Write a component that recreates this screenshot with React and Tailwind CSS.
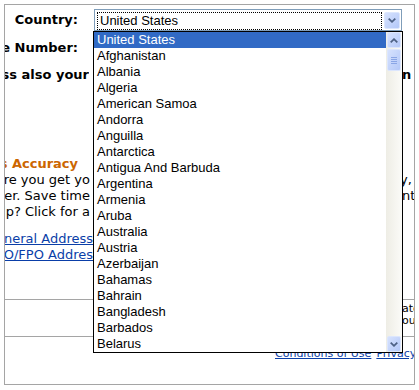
import React from "react";

const COUNTRIES = [
  "United States",
  "Afghanistan",
  "Albania",
  "Algeria",
  "American Samoa",
  "Andorra",
  "Anguilla",
  "Antarctica",
  "Antigua And Barbuda",
  "Argentina",
  "Armenia",
  "Aruba",
  "Australia",
  "Austria",
  "Azerbaijan",
  "Bahamas",
  "Bahrain",
  "Bangladesh",
  "Barbados",
  "Belarus",
];

const Chevron = ({ up }) => (
  <svg width="8" height="5" viewBox="0 0 8 5">
    <path
      d={up ? "M0.7 4.3 4 1.2 7.3 4.3" : "M0.7 0.7 4 3.8 7.3 0.7"}
      fill="none"
      stroke="#4d6185"
      strokeWidth="1.8"
    />
  </svg>
);

// XP style blue scroll/combo button
const XpButton = ({ up, className = "" }) => (
  <div
    className={`flex items-center justify-center rounded-[2px] border border-[#dce6fd] bg-gradient-to-br from-[#d6e2fe] to-[#b4c8f8] ${className}`}
  >
    <Chevron up={up} />
  </div>
);

const DropdownList = () => (
  <div className="absolute left-[-2px] top-[21px] w-[310px] h-[322px] border border-black bg-white flex z-10">
    {/* Items */}
    <div className="w-[292px] flex flex-col font-['Liberation_Sans',Arial,sans-serif] text-[13px] leading-[16px]">
      {COUNTRIES.map((c, i) => (
        <div
          key={c}
          className={`h-[16px] pl-[3px] whitespace-nowrap ${
            i === 0 ? "bg-[#316ac5] text-white" : "text-black"
          }`}
        >
          {c}
        </div>
      ))}
    </div>

    {/* Scrollbar */}
    <div className="w-[16px] flex flex-col bg-gradient-to-r from-[#eeede5] to-[#fbfbf8]">
      <XpButton up className="h-[16px] mx-[1px]" />
      <div className="mt-[1px] h-[22px] mx-[1px] rounded-[2px] border border-[#dce6fd] bg-gradient-to-br from-[#d6e2fe] to-[#b4c8f8] flex flex-col items-center justify-center gap-[1px]">
        <div className="w-[6px] h-[1px] bg-[#8aa6e6]" />
        <div className="w-[6px] h-[1px] bg-[#8aa6e6]" />
        <div className="w-[6px] h-[1px] bg-[#8aa6e6]" />
        <div className="w-[6px] h-[1px] bg-[#8aa6e6]" />
      </div>
      <XpButton className="mt-auto h-[16px] mx-[1px]" />
    </div>
  </div>
);

const App = () => {
  return (
    <div className="w-[419px] h-[390px] bg-white pt-[4px] pl-[4px] font-['DejaVu_Sans',Verdana,sans-serif] text-black">
      <div className="relative w-[411px] h-[381px] border border-[#a5a5a5] overflow-hidden flex flex-col">
        {/* Country row */}
        <div className="mt-[4px] h-[22px] flex items-center">
          <div className="w-[73px] shrink-0 flex justify-end overflow-hidden whitespace-nowrap text-[13px] leading-[16px] font-bold">
            <span>Country:</span>
          </div>
          <div className="relative ml-[16px] w-[308px] h-[22px] border border-[#7f9db9] bg-white flex p-[1px]">
            <div className="m-[1px] w-[286px] h-[18px] border border-dotted border-black pl-[2px] font-['Liberation_Sans',Arial,sans-serif] text-[13px] leading-[16px] whitespace-nowrap">
              United States
            </div>
            <XpButton className="ml-[1px] mt-[1px] w-[16px] h-[17px]" />
            <DropdownList />
          </div>
        </div>

        {/* Phone row */}
        <div className="mt-[9px] h-[16px] flex text-[13px] leading-[16px] font-bold">
          <div className="w-[73px] shrink-0 flex justify-end overflow-hidden whitespace-nowrap">
            <span>Phone Number:</span>
          </div>
        </div>

        {/* Notice row */}
        <div className="mt-[11px] h-[16px] flex text-[13px] leading-[16px] font-bold">
          <div className="w-[84px] shrink-0 flex justify-end overflow-hidden whitespace-nowrap">
            <span>Please address also your</span>
          </div>
          <div className="flex-1" />
          <div className="w-[12px] shrink-0 overflow-hidden whitespace-nowrap">n</div>
        </div>

        {/* Address accuracy */}
        <div className="mt-[73px] h-[16px] flex text-[13px] leading-[16px] font-bold text-[#cc6600]">
          <div className="w-[73px] shrink-0 flex justify-end overflow-hidden whitespace-nowrap">
            <span>Address Accuracy</span>
          </div>
        </div>
        <div className="flex flex-col text-[13px] leading-[16px]">
          <div className="h-[16px] flex">
            <div className="w-[85px] shrink-0 flex justify-end overflow-hidden whitespace-nowrap">
              <span>To make sure you get yo</span>
            </div>
            <div className="flex-1" />
            <div className="w-[14px] shrink-0 overflow-hidden whitespace-nowrap">y,</div>
          </div>
          <div className="h-[16px] flex">
            <div className="w-[85px] shrink-0 flex justify-end overflow-hidden whitespace-nowrap">
              <span>number. Save time</span>
            </div>
            <div className="flex-1" />
            <div className="w-[12px] shrink-0 overflow-hidden whitespace-nowrap">nt</div>
          </div>
          <div className="h-[16px] flex">
            <div className="w-[85px] shrink-0 flex justify-end overflow-hidden whitespace-nowrap">
              <span>Need help? Click for a</span>
            </div>
          </div>
        </div>

        {/* Links */}
        <div className="mt-[11px] flex flex-col text-[13px] leading-[16px] text-[#0a3ea8]">
          <div className="h-[16px] flex">
            <div className="w-[88px] shrink-0 flex justify-end overflow-hidden whitespace-nowrap">
              <a className="underline">General Address</a>
            </div>
          </div>
          <div className="h-[16px] flex">
            <div className="w-[88px] shrink-0 flex justify-end overflow-hidden whitespace-nowrap">
              <a className="underline">APO/FPO Addres</a>
            </div>
          </div>
        </div>

        {/* Footer note between rules */}
        <div className="mt-[36px] h-[38px] border-t border-b border-[#a5a5a5] flex flex-col pt-[3px] text-[11px] leading-[12px]">
          <div className="h-[12px] flex">
            <div className="flex-1" />
            <div className="w-[12px] shrink-0 overflow-hidden whitespace-nowrap">ato</div>
          </div>
          <div className="h-[12px] flex">
            <div className="flex-1" />
            <div className="w-[12px] shrink-0 overflow-hidden whitespace-nowrap">ou</div>
          </div>
        </div>

        {/* Bottom links */}
        <div className="mt-[10px] pl-[270px] h-[13px] flex text-[11px] leading-[13px] text-[#0a3ea8] whitespace-nowrap">
          <a className="underline">Conditions of Use</a>
          <span className="w-[5px] shrink-0" />
          <a className="underline">Privacy Notice</a>
        </div>
      </div>
    </div>
  );
};

export default App;
